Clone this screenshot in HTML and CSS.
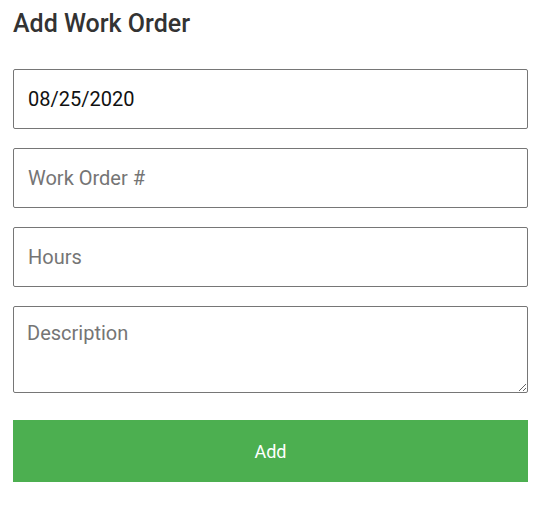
FILE: index.html
```html
<!DOCTYPE html>
<html>
<head>
<meta charset="utf-8">
<link rel="stylesheet" href="styles.css">
</head>
<body>
<form class="form">
  <h2 class="title">Add Work Order</h2>
  <input class="field" type="text" value="08/25/2020">
  <input class="field" type="text" placeholder="Work Order #">
  <input class="field" type="text" placeholder="Hours">
  <textarea class="field area" placeholder="Description"></textarea>
  <button class="btn" type="button">Add</button>
</form>
</body>
</html>
```
FILE: styles.css
```css
html, body {
  margin: 0;
  padding: 0;
  background: #fff;
}
body {
  font-family: Roboto, "Noto Sans", sans-serif;
}
.form {
  display: flex;
  flex-direction: column;
  padding: 10px 12px 0 13px;
}
.title {
  margin: 0 0 31px 0;
  font-size: 25px;
  line-height: 28px;
  font-weight: 500;
  color: #333;
}
.field {
  box-sizing: border-box;
  height: 60px;
  margin: 0 0 19px 0;
  padding: 0 14px;
  border: 1px solid #767676;
  border-radius: 2px;
  font-family: Roboto, sans-serif;
  font-size: 20px;
  color: #111;
  background: #fff;
  outline: none;
}
.field::placeholder {
  color: #757575;
}
.area {
  height: 87px;
  padding: 14px 13px 13px;
  margin-bottom: 27px;
  resize: vertical;
}
.btn {
  height: 62px;
  border: none;
  background: #4caf50;
  color: #fff;
  font-family: Roboto, sans-serif;
  font-size: 18px;
  font-weight: 400;
  cursor: pointer;
}
```
